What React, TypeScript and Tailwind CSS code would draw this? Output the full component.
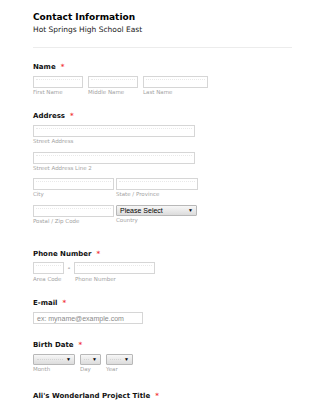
import * as React from "react"

const labelFont = { fontFamily: '"DejaVu Sans", Verdana, sans-serif' }

function Label({ text }: { text: string }) {
  return (
    <div className="flex items-start text-[7px] leading-[9px] font-bold text-[#111]" style={labelFont}>
      <span>{text}</span>
      <span className="ml-[5px] text-[#f23a3c]">*</span>
    </div>
  )
}

function Sub({ text, className = "" }: { text: string; className?: string }) {
  return (
    <div className={`text-[5.5px] leading-[7px] text-[#a3a3a3] whitespace-nowrap ${className}`} style={labelFont}>
      {text}
    </div>
  )
}

function Box({ w, h = "h-[12px]", children }: { w: string; h?: string; children?: React.ReactNode }) {
  return (
    <div className={`${w} ${h} border border-[#d6d6d6] bg-white p-[2px] flex items-center`}>
      {children ?? <div className="w-full self-start border-t border-dotted border-[#e9e9e9]" />}
    </div>
  )
}

function Select({ w, text }: { w: string; text?: string }) {
  return (
    <div
      className={`${w} h-[11px] flex items-center justify-between rounded-[1px] border border-[#b8b8b8] bg-gradient-to-b from-[#f7f7f7] to-[#dcdcdc] pl-[3px] pr-[3px]`}
    >
      {text ? (
        <span className="text-[7px] leading-[9px] text-black" style={{ fontFamily: '"Liberation Sans", Arial, sans-serif' }}>
          {text}
        </span>
      ) : (
        <span className="flex-1 mr-[3px] border-t border-dotted border-[#d4d4d4]" />
      )}
      <span className="text-[5px] leading-[5px] text-black">▼</span>
    </div>
  )
}

export default function App() {
  return (
    <div className="w-[325px] h-[400px] overflow-hidden bg-white pl-[33px] pr-[33px]">
      {/* header */}
      <div className="pt-[12px] text-[9px] leading-[11px] font-bold text-black" style={labelFont}>
        Contact Information
      </div>
      <div className="mt-[2px] text-[7.5px] leading-[10px] text-[#222]" style={labelFont}>
        Hot Springs High School East
      </div>
      <div className="mt-[12px] h-px w-[259px] bg-[#ececec]" />

      {/* name */}
      <div className="mt-[15px]">
        <Label text="Name" />
        <div className="mt-[4px] flex gap-[5px]">
          <div>
            <Box w="w-[50px]" />
            <Sub text="First Name" className="mt-[1px]" />
          </div>
          <div>
            <Box w="w-[50px]" />
            <Sub text="Middle Name" className="mt-[1px]" />
          </div>
          <div>
            <Box w="w-[65px]" />
            <Sub text="Last Name" className="mt-[1px]" />
          </div>
        </div>
      </div>

      {/* address */}
      <div className="mt-[16px]">
        <Label text="Address" />
        <div className="mt-[4px]">
          <Box w="w-[162px]" />
          <Sub text="Street Address" className="mt-[1px]" />
        </div>
        <div className="mt-[7px]">
          <Box w="w-[162px]" />
          <Sub text="Street Address Line 2" className="mt-[1px]" />
        </div>
        <div className="mt-[6px] flex gap-[2px]">
          <div>
            <Box w="w-[81px]" />
            <Sub text="City" className="mt-[1px]" />
          </div>
          <div>
            <Box w="w-[82px]" />
            <Sub text="State / Province" className="mt-[1px]" />
          </div>
        </div>
        <div className="mt-[7px] flex gap-[2px]">
          <div>
            <Box w="w-[81px]" />
            <Sub text="Postal / Zip Code" className="mt-[1px]" />
          </div>
          <div>
            <Select w="w-[81px]" text="Please Select" />
            <Sub text="Country" className="mt-[1px]" />
          </div>
        </div>
      </div>

      {/* phone */}
      <div className="mt-[25px]">
        <Label text="Phone Number" />
        <div className="mt-[3px] flex">
          <div>
            <Box w="w-[31px]" />
            <Sub text="Area Code" className="mt-[2px]" />
          </div>
          <div className="w-[10px] h-[12px] flex items-center justify-center text-[7px] text-[#444]" style={labelFont}>
            -
          </div>
          <div>
            <Box w="w-[81px]" />
            <Sub text="Phone Number" className="mt-[2px] pl-[1px]" />
          </div>
        </div>
      </div>

      {/* email */}
      <div className="mt-[16px]">
        <Label text="E-mail" />
        <div className="mt-[4px]">
          <Box w="w-[110px]">
            <span
              className="pl-[1px] text-[7px] leading-[9px] text-[#8a8a8a] whitespace-nowrap"
              style={{ fontFamily: '"Liberation Sans", Arial, sans-serif' }}
            >
              ex: myname@example.com
            </span>
          </Box>
        </div>
      </div>

      {/* birth date */}
      <div className="mt-[17px]">
        <Label text="Birth Date" />
        <div className="mt-[4px] flex gap-[5px]">
          <div>
            <Select w="w-[42px]" />
            <Sub text="Month" className="mt-[1px]" />
          </div>
          <div>
            <Select w="w-[21px]" />
            <Sub text="Day" className="mt-[1px]" />
          </div>
          <div>
            <Select w="w-[27px]" />
            <Sub text="Year" className="mt-[1px]" />
          </div>
        </div>
      </div>

      {/* project title */}
      <div className="mt-[19px]">
        <Label text="Ali's Wonderland Project Title" />
      </div>
    </div>
  )
}
